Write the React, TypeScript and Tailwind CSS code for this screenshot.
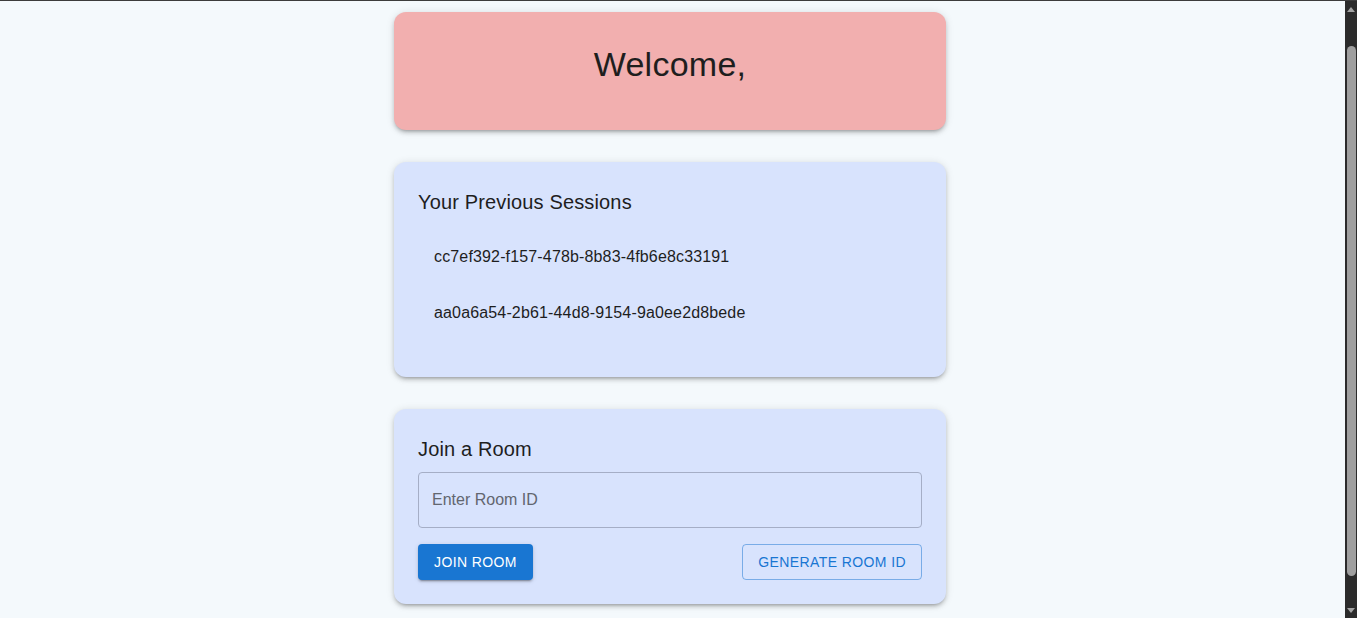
const sessions = [
  'cc7ef392-f157-478b-8b83-4fb6e8c33191',
  'aa0a6a54-2b61-44d8-9154-9a0ee2d8bede',
]

const cardShadow =
  'shadow-[0px_3px_3px_-2px_rgba(0,0,0,0.2),0px_3px_4px_0px_rgba(0,0,0,0.14),0px_1px_8px_0px_rgba(0,0,0,0.12)]'

function Scrollbar() {
  return (
    <div className="w-3 flex-none bg-[#2b2b2b] flex flex-col items-center pt-[6px]">
      <svg width="8" height="5" viewBox="0 0 8 5">
        <path d="M4 0 L8 5 L0 5 Z" fill="#a3a3a3" />
      </svg>
      <div className="mt-[34px] h-[530px] w-[9px] rounded-full bg-[#9f9f9f]" />
      <svg width="8" height="5" viewBox="0 0 8 5" className="mt-[32px]">
        <path d="M0 0 L8 0 L4 5 Z" fill="#a3a3a3" />
      </svg>
    </div>
  )
}

export default function App() {
  return (
    <div className="h-[618px] overflow-hidden flex flex-col bg-[#f4f9fc] text-[#1e1e1e] font-['Liberation_Sans',Arial,sans-serif]">
      <div className="h-px flex-none bg-[#3c3c3c]" />
      <div className="flex flex-1 min-h-0">
        <main className="flex-1 flex justify-center pr-[5px] pt-[11px]">
          <div className="w-[552px] flex flex-col gap-8">
            <section className={`rounded-xl bg-[#f2afaf] p-8 text-center ${cardShadow}`}>
              <h1 className="text-[34px] leading-[1.235] tracking-[0.00735em] mb-[12px]">Welcome,</h1>
            </section>

            <section className={`rounded-xl bg-[#d8e3fd] p-6 ${cardShadow}`}>
              <h2 className="text-xl leading-8 font-medium tracking-[0.0075em] mb-[7px]">
                Your Previous Sessions
              </h2>
              <ul className="py-2">
                {sessions.map((id) => (
                  <li key={id} className="pl-4 pt-3 pb-5 text-base leading-6 tracking-[0.00938em]">
                    {id}
                  </li>
                ))}
              </ul>
            </section>

            <section className={`rounded-xl bg-[#d8e3fd] p-6 ${cardShadow}`}>
              <h2 className="text-xl leading-8 font-medium tracking-[0.0075em] mb-[7px]">Join a Room</h2>
              <input
                placeholder="Enter Room ID"
                className="h-14 w-full rounded border border-[#a5aec6] bg-transparent px-[13px] text-base outline-none placeholder:text-[#62666f]"
              />
              <div className="mt-4 flex justify-between">
                <button className="h-9 px-4 rounded bg-[#1976d2] text-white text-sm font-medium uppercase tracking-[0.02857em] shadow-[0px_3px_1px_-2px_rgba(0,0,0,0.2),0px_2px_2px_0px_rgba(0,0,0,0.14),0px_1px_5px_0px_rgba(0,0,0,0.12)]">
                  Join Room
                </button>
                <button className="h-9 px-[15px] rounded border border-[#1976d2]/50 text-[#1976d2] text-sm font-medium uppercase tracking-[0.02857em]">
                  Generate Room ID
                </button>
              </div>
            </section>
          </div>
        </main>
        <Scrollbar />
      </div>
    </div>
  )
}
